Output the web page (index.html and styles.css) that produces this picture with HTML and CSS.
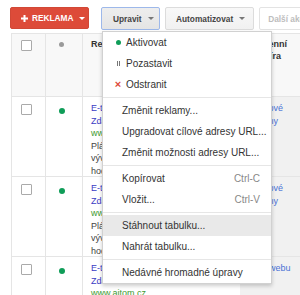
FILE: index.html
```
<!DOCTYPE html>
<html>
  <head>
    <meta charset="utf-8">
    <title>Reklamy</title>
    <link rel="stylesheet" href="styles.css">
  </head>
  <body>

    <!-- horni lista s tlacitky -->
    <div class="toolbar">
      <div class="btn btn-red">
        <svg class="plus" width="7" height="7" viewBox="0 0 7 7"><rect x="2.5" y="0" width="2" height="7" fill="#fff"/><rect x="0" y="2.5" width="7" height="2" fill="#fff"/></svg>
        <span>REKLAMA</span>
        <span class="caret"></span>
      </div>
      <span class="divider"></span>
      <div class="dropdown">
        <div class="btn btn-open">
          <span>Upravit</span>
          <span class="caret"></span>
        </div>
        <div class="menu">
          <div class="item item-icon"><span class="ico"><span class="ico-dot"></span></span>Aktivovat</div>
          <div class="item item-icon"><span class="ico"><span class="ico-pause"></span></span>Pozastavit</div>
          <div class="item item-icon"><span class="ico ico-x">&times;</span>Odstranit</div>
          <div class="sep"></div>
          <div class="item">Změnit reklamy...</div>
          <div class="item">Upgradovat cílové adresy URL...</div>
          <div class="item">Změnit možnosti adresy URL...</div>
          <div class="sep"></div>
          <div class="item">Kopírovat<span class="key">Ctrl-C</span></div>
          <div class="item">Vložit...<span class="key">Ctrl-V</span></div>
          <div class="sep"></div>
          <div class="item item-hover">Stáhnout tabulku...</div>
          <div class="item">Nahrát tabulku...</div>
          <div class="sep"></div>
          <div class="item">Nedávné hromadné úpravy</div>
        </div>
      </div>
      <div class="btn">
        <span>Automatizovat</span>
        <span class="caret"></span>
      </div>
      <div class="btn btn-off">Další akce</div>
    </div>

    <!-- tabulka reklam -->
    <div class="grid">
      <div class="row row-head">
        <div class="cell c-check"><span class="box"></span></div>
        <div class="cell c-dot"><span class="dot dot-gray"></span></div>
        <div class="cell c-ad"><b>Reklama</b></div>
        <div class="cell c-last"><b>Denní<br>míra</b></div>
      </div>

      <div class="row">
        <div class="cell c-check"><span class="box"></span></div>
        <div class="cell c-dot"><span class="dot"></span></div>
        <div class="cell c-ad">
          <a class="lnk">E-tabulky online</a>
          <a class="lnk">Zdarma na 30 dní</a>
          <span class="url">www.aitom.cz</span>
          <span class="txt">Plánování výroby</span>
          <span class="txt">vývoj na míru</span>
          <span class="txt">hodnocení zdarma</span>
        </div>
        <div class="cell c-last"><a class="lnk2">Nové</a><a class="lnk2">Dny</a></div>
      </div>

      <div class="row">
        <div class="cell c-check"><span class="box"></span></div>
        <div class="cell c-dot"><span class="dot"></span></div>
        <div class="cell c-ad">
          <a class="lnk">E-tabulky online</a>
          <a class="lnk">Zdarma na 30 dní</a>
          <span class="url">www.aitom.cz</span>
          <span class="txt">Plánování výroby</span>
          <span class="txt">vývoj na míru</span>
          <span class="txt">hodnocení zdarma</span>
        </div>
        <div class="cell c-last"><a class="lnk2">Nové</a><a class="lnk2">Dny</a></div>
      </div>

      <div class="row">
        <div class="cell c-check"><span class="box"></span></div>
        <div class="cell c-dot"><span class="dot"></span></div>
        <div class="cell c-ad">
          <a class="lnk">E-tabulky online</a>
          <a class="lnk">Zdarma na 30 dní</a>
          <span class="url">www.aitom.cz</span>
        </div>
        <div class="cell c-last"><a class="lnk2">z webu</a></div>
      </div>
    </div>

  </body>
</html>
```

FILE: styles.css
```
body {
    margin: 0;
    width: 300px;
    height: 295px;
    overflow: hidden;
    background-color: white;
    font-family: "Liberation Sans", Arial, sans-serif;
    color: #333;
    }

/* ===== lista ===== */
.toolbar {
    display: flex;
    align-items: flex-start;
    height: 33px;
    box-sizing: border-box;
    padding: 7px 0 0 10px;
    white-space: nowrap;
    }

.btn {
    flex-shrink: 0;
    display: flex;
    align-items: center;
    gap: 6px;
    height: 23px;
    box-sizing: border-box;
    padding: 0 8px 0 10px;
    border: 1px solid #dcdcdc;
    border-radius: 2px;
    background: linear-gradient(#f8f8f8, #f1f1f1);
    color: #444;
    font-size: 8.3px;
    font-weight: bold;
    margin-right: 5px;
    }

.btn-red {
    height: 22px;
    width: 79px;
    gap: 4px;
    padding: 0 0 0 10px;
    background: #dd4b39;
    border-color: #d14836;
    color: white;
    margin-right: 8px;
    }

.btn-open {
    width: 59px;
    padding-left: 11px;
    background: linear-gradient(#eeeeee, #e4e4e4);
    border-color: #9db8ea;
    }

.btn-off {
    background: white;
    border-color: #e3e3e3;
    color: #bdbdbd;
    padding-left: 8px;
    width: 60px;
    }

.caret {
    width: 0;
    height: 0;
    border-left: 3px solid transparent;
    border-right: 3px solid transparent;
    border-top: 3px solid #777;
    }

.btn-red .caret {
    border-top-color: white;
    margin-left: 2px;
    }

.divider {
    width: 1px;
    height: 24px;
    margin-top: -1px;
    margin-right: 4px;
    background: #e2e2e2;
    }

/* ===== menu ===== */
.dropdown {
    position: relative;
    margin-right: 0;
    }

.menu {
    position: absolute;
    top: 24px;
    left: 1px;
    width: 170px;
    box-sizing: border-box;
    background: white;
    border: 1px solid rgba(0, 0, 0, 0.18);
    box-shadow: 0 2px 4px rgba(0, 0, 0, 0.2);
    z-index: 10;
    font-size: 10px;
    font-weight: normal;
    color: #333;
    }

.item {
    display: flex;
    align-items: center;
    height: 21px;
    padding: 0 11px 0 19px;
    }

.item-icon {
    padding-left: 12px;
    }

.item-hover {
    background: #e9e9e9;
    }

.ico {
    width: 6px;
    margin-right: 5px;
    display: flex;
    justify-content: center;
    align-items: center;
    }

.ico-dot {
    width: 5px;
    height: 5px;
    border-radius: 50%;
    background: #0f9d58;
    }

.ico-pause {
    width: 1px;
    height: 5px;
    border-left: 1.5px solid #777;
    border-right: 1.5px solid #777;
    }

.ico-x {
    color: #dd4b39;
    font-size: 11px;
    font-weight: bold;
    line-height: 1;
    }

.key {
    margin-left: auto;
    color: #888;
    }

.sep {
    height: 1px;
    margin: 2px 0;
    background: #e6e6e6;
    }

/* ===== tabulka ===== */
.grid {
    margin-left: 11px;
    width: 320px;
    border-top: 1px solid #e5e5e5;
    font-size: 9px;
    }

.row {
    display: grid;
    grid-template-columns: 34px 37px 158px 91px;
    height: 80px;
    box-sizing: border-box;
    border-bottom: 1px solid #e5e5e5;
    }

.row-head {
    height: 63px;
    background: #f8f8f8;
    }

.cell {
    border-left: 1px solid #e5e5e5;
    padding-top: 5px;
    overflow: hidden;
    white-space: nowrap;
    line-height: 12.5px;
    }

.row-head .cell {
    padding-top: 4px;
    line-height: 12px;
    }

.c-check {
    padding-left: 9px;
    }

.c-dot {
    padding-left: 13px;
    }

.c-ad {
    padding-left: 8px;
    display: flex;
    flex-direction: column;
    }

.c-last {
    border-left: none;
    padding-left: 22px;
    background: #f1f1f1;
    display: flex;
    flex-direction: column;
    }

.row-head .c-last {
    background: transparent;
    display: block;
    }

b {
    color: #333;
    }

.box {
    display: block;
    width: 11px;
    height: 11px;
    box-sizing: border-box;
    margin-top: 2px;
    border: 1px solid #aaa;
    border-radius: 1px;
    background: white;
    }

.row-head .box {
    margin-top: 2px;
    }

.dot {
    display: block;
    width: 6px;
    height: 6px;
    margin-top: 6px;
    border-radius: 50%;
    background: #0f9d58;
    }

.dot-gray {
    width: 5px;
    height: 5px;
    margin-top: 4px;
    background: #9a9a9a;
    }

.lnk {
    color: #3b3bc4;
    }

.lnk2 {
    color: #4a72d6;
    }

.url {
    color: #3d9a2f;
    }

.txt {
    color: #444;
    }
```
